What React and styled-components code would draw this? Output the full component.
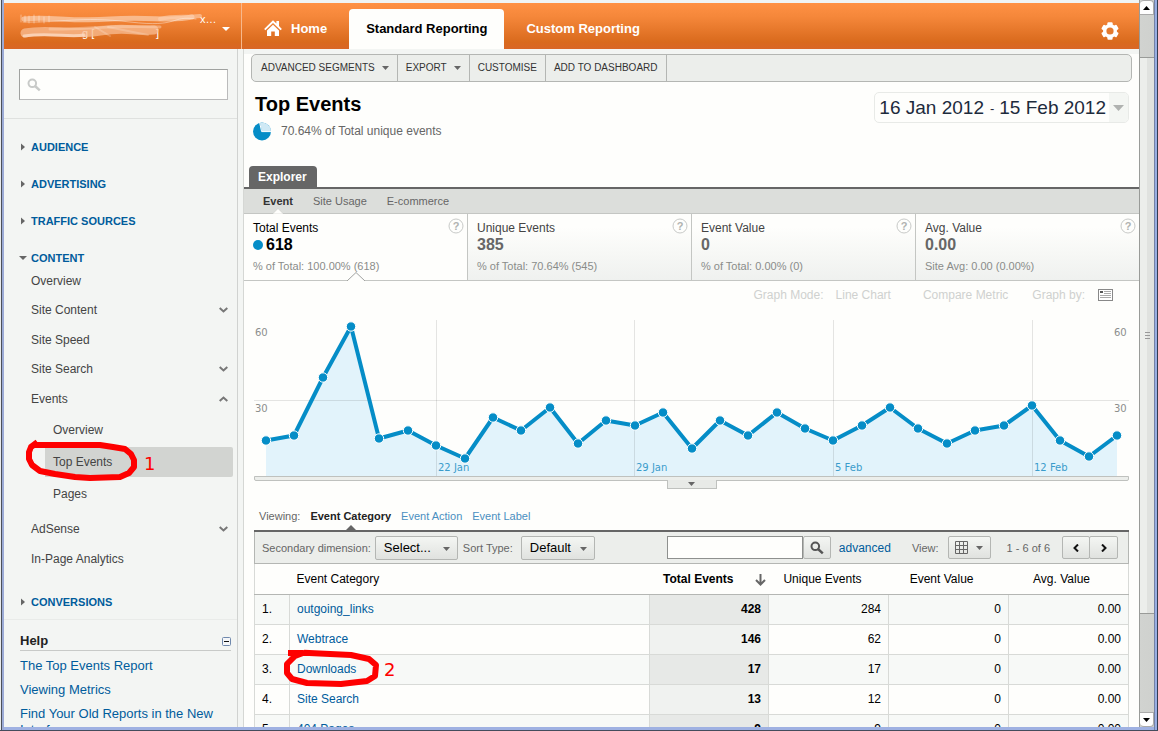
import React from 'react';
import styled, { createGlobalStyle, css } from 'styled-components';

const GlobalStyle = createGlobalStyle`
  * { box-sizing: border-box; }
  html, body { margin: 0; height: 100%; }
  body {
    font-family: "Liberation Sans", Arial, sans-serif;
    font-size: 12px;
    line-height: 16px;
    color: #000;
    background: #fff;
    overflow: hidden;
  }
  #root { height: 100%; }
  button, input, select { font: inherit; color: inherit; margin: 0; padding: 0; }
  ul { list-style: none; margin: 0; padding: 0; }
  a { color: inherit; text-decoration: none; }
  h1, h2, h3 { margin: 0; font: inherit; }
`;

const BLUE = '#058dc7';
const LINK = '#005c9c';
const RED = '#fe0000';

/* ---------- window ---------- */

const Window = styled.div`
  display: flex;
  height: 100vh;
  padding: 0 4px 3px;
  border-bottom: 1px solid #444c5c;
  background: linear-gradient(90deg, #e8ebee 0 1px, #4c5058 1px 2px, #9cabd6 2px 4px, #9fb1e2 4px calc(100% - 4px), #7482a6 calc(100% - 4px) calc(100% - 3px), #98aee2 calc(100% - 3px) calc(100% - 1px), #333c50 calc(100% - 1px));
  overflow: hidden;
`;

const Page = styled.div`
  flex: 1;
  min-width: 0;
  display: flex;
  flex-direction: column;
  background: #fefefc;
`;

const Columns = styled.div`
  flex: 1;
  min-height: 0;
  display: flex;
`;

const ScrollTrack = styled.div`
  width: 15px;
  display: flex;
  flex-direction: column;
  justify-content: space-between;
  border-left: 1px solid #999b98;
  background: linear-gradient(90deg, #d1d3d0, #cfd1ce);
`;

const ScrollButton = styled.button`
  height: 15px;
  display: flex;
  align-items: center;
  justify-content: center;
  border: 1px solid #aaa;
  border-left: 0;
  border-radius: ${(p) => (p.$end ? '0 0 4px 4px' : '4px 4px 0 0')};
  background: #fefefe;
`;

const ScrollThumb = styled.div`
  flex: 557;
  display: flex;
  align-items: center;
  justify-content: center;
  border: solid #999b98;
  border-width: 1px 0;
  background: linear-gradient(90deg, #eceeeb 50%, #e0e2df 50%);
`;

const Trough = styled.div`
  flex: ${(p) => p.$grow};
`;

/* ---------- header ---------- */

const Header = styled.header`
  display: flex;
  height: 49px;
  border-top: 3px solid #f0f4f4;
  background: linear-gradient(#ff9144 0%, #f5873a 30%, #d96a1d 85%, #d96626 100%);
  color: #fff;
`;

const AccountButton = styled.button`
  width: 238px;
  display: flex;
  align-items: center;
  justify-content: space-between;
  padding: 6px 11px 0 16px;
  border: 0;
  border-right: 1px solid #f7b88c;
  background: none;
`;

const HeaderTabs = styled.nav`
  flex: 1;
  display: flex;
  align-items: flex-end;
  font-size: 13px;
  font-weight: bold;
`;

const HeaderTab = styled.a`
  height: 40px;
  display: flex;
  align-items: center;
  gap: 9px;
  padding: 0 ${(p) => p.$pad || 22}px;
  border-radius: 4px 4px 0 0;
  ${(p) => p.$active && css`
    color: #000;
    background: #fefefc;
  `}
`;

const SettingsButton = styled.button`
  width: 58px;
  padding-top: 9px;
  border: 0;
  background: none;
  display: flex;
  align-items: center;
  justify-content: center;
`;

/* ---------- sidebar ---------- */

const Sidebar = styled.aside`
  width: 233px;
  overflow: hidden;
  background: #f3f5f3;
  color: #444;
`;

const Splitter = styled.div`
  width: 7px;
  background: linear-gradient(90deg, #d0d2d0 0 1px, #f3f5f3 1px 6px, #d5d7d4 6px);
`;

const SearchArea = styled.form`
  padding: 20px 9px 18px 15px;
  border-bottom: 1px solid #dfe1df;
`;

const SearchBox = styled.label`
  display: flex;
  align-items: center;
  height: 31px;
  padding-left: 7px;
  gap: 6px;
  border: 1px solid #bbb;
  border-top-color: #a0a2a0;
  border-left-color: #a0a2a0;
  background: #fefefc;
`;

const PlainInput = styled.input`
  flex: 1;
  min-width: 0;
  border: 0;
  outline: 0;
  background: none;
`;

const Sections = styled.nav`
  display: flex;
  flex-direction: column;
  gap: 21px;
  padding: 20px 0 9px 15px;
  border-bottom: 1px solid #e9ebe9;
`;

const SectionTitle = styled.a`
  display: flex;
  align-items: center;
  gap: 4px;
  height: 16px;
  font-size: 11px;
  font-weight: bold;
  color: ${LINK};
`;

const NavItem = styled.a`
  display: flex;
  align-items: center;
  justify-content: space-between;
  height: ${(p) => (p.$group ? 30 : 29)}px;
  padding: 0 9px 0 12px;
`;

const SubList = styled.ul`
  display: flex;
  flex-direction: column;
  gap: 2px;
  padding: 1px 4px 5px 26px;
`;

const SubItem = styled.a`
  position: relative;
  display: flex;
  align-items: center;
  height: 30px;
  padding-left: 8px;
  border-radius: 0 2px 2px 0;
  background: ${(p) => (p.$active ? '#d2d4d1' : 'transparent')};
`;

const Help = styled.section`
  padding: 12px 16px;
  a { display: block; margin-bottom: 8px; color: ${LINK}; font-size: 13px; }
`;

const HelpTitle = styled.div`
  display: flex;
  align-items: center;
  justify-content: space-between;
  height: 19px;
  margin: 0 -10px 7px 0;
  border-bottom: 1px solid #c8cac8;
  font-size: 13px;
  font-weight: bold;
  color: #222;
`;

const IconButton = styled.button`
  display: flex;
  border: 0;
  background: none;
`;

/* ---------- annotations ---------- */

const Ring = styled.svg`
  position: absolute;
  left: ${(p) => p.$left}px;
  top: ${(p) => p.$top}px;
  overflow: visible;
  pointer-events: none;
  z-index: 2;
  path { fill: none; stroke: ${RED}; stroke-width: 6; stroke-linecap: square; stroke-linejoin: round; }
  text { fill: ${RED}; font: 18px "DejaVu Sans", sans-serif; }
`;

/* ---------- report ---------- */

const Main = styled.main`
  flex: 1;
  min-width: 0;
  overflow: hidden;
  border-top: 5px solid #f3f5f3;
`;

const ActionBar = styled.div`
  display: flex;
  height: 28px;
  margin: 0 7px;
  border: 1px solid #b4b6b3;
  border-radius: 5px;
  background: #eceeeb;
`;

const ActionButton = styled.button`
  display: flex;
  align-items: center;
  gap: 7px;
  padding: 0 8px;
  border: 0;
  border-right: 1px solid #b4b6b3;
  background: none;
  font-size: 10px;
  color: #333;
  &:first-child { padding-left: 9px; }
`;

const TitleRow = styled.div`
  display: flex;
  justify-content: space-between;
  align-items: flex-start;
  padding: 10px 10px 0 9px;
`;

const Title = styled.h1`
  padding-left: 2px;
  font-size: 20px;
  line-height: 24px;
  font-weight: bold;
`;

const Coverage = styled.p`
  display: flex;
  align-items: center;
  gap: 9px;
  height: 20px;
  margin: 5px 0 0;
  color: #666;
`;

const DateButton = styled.button`
  display: flex;
  align-items: center;
  height: 31px;
  padding: 0 0 0 4px;
  border: 1px solid #e8eae7;
  border-radius: 5px;
  background: #fefefc;
  font-size: 19px;
  color: #1d2b3c;
  overflow: hidden;
  small { font-size: 13px; padding: 3px 5px 0 6px; }
`;

const DateArrow = styled.span`
  display: flex;
  align-items: center;
  justify-content: center;
  align-self: stretch;
  width: 19px;
  margin-left: 3px;
  background: #f4f6f3;
`;

const TabStrip = styled.div`
  display: flex;
  margin-top: 25px;
  padding-left: 5px;
  border-bottom: 2px solid #666;
`;

const ExplorerTab = styled.button`
  height: 21px;
  padding: 0 10px 0 9px;
  border: 0;
  border-radius: 4px 4px 0 0;
  background: #666;
  color: #fff;
  font-weight: bold;
  font-size: 12px;
`;

const GroupNav = styled.nav`
  display: flex;
  align-items: center;
  gap: 20px;
  height: 25px;
  padding-left: 19px;
  border-bottom: 1px solid #c4c6c3;
  background: #dcdedb;
  font-size: 11px;
  color: #666;
`;

const GroupLink = styled.a`
  position: relative;
  ${(p) => p.$active && css`
    color: #333;
    font-weight: bold;
  `}
`;

const Notch = styled.svg`
  position: absolute;
  left: 50%;
  bottom: ${(p) => p.$bottom}px;
  transform: translateX(-50%);
  display: block;
`;

const Cards = styled.div`
  display: flex;
  border-bottom: 1px solid #c4c6c3;
`;

const Card = styled.button`
  position: relative;
  flex: 1;
  display: flex;
  flex-direction: column;
  height: 66px;
  padding: 6px 9px 0;
  border: 0;
  text-align: left;
  color: #444;
  background: linear-gradient(#fefefc 20%, #eff1ef);
  &:not(:last-child) { border-right: 1px solid #c4c6c3; }
  ${(p) => p.$active && css`
    color: #000;
    background: #fefefc;
  `}
`;

const CardValue = styled.strong`
  display: flex;
  align-items: center;
  gap: 3px;
  height: 18px;
  font-size: 16px;
  color: ${(p) => (p.$active ? '#000' : '#666')};
`;

const CardNote = styled.span`
  display: block;
  margin-top: 5px;
  font-size: 11px;
  line-height: 14px;
  color: #8a8c8a;
`;

const HelpMark = styled.svg`
  position: absolute;
  top: 4px;
  right: 3px;
  circle { fill: #fefefc; stroke: #c8cac8; }
  text { font: bold 11px "Liberation Sans", sans-serif; fill: #b0b2b0; text-anchor: middle; }
`;

const GraphOptions = styled.div`
  display: flex;
  justify-content: flex-end;
  align-items: center;
  height: 28px;
  padding-right: 26px;
  color: #cfd1cf;
  span + span { margin-left: 12px; }
  span:nth-child(3) { margin-left: 32px; }
  span:nth-child(4) { margin-left: 24px; }
  svg { margin-left: 13px; }
`;

const ChartBox = styled.section`
  margin: 11px 10px 0;
  svg { display: block; width: 100%; height: auto; }
  text { font: 10px "DejaVu Sans", sans-serif; fill: #8c8e8c; }
  text.date { fill: #3a9ccb; }
`;

const ChartBar = styled.div`
  height: 5px;
  margin: 0 10px;
  border: 1px solid #bfc1be;
  border-radius: 0 0 2px 2px;
  background: #eceeeb;
`;

const ChartHandle = styled.button`
  display: flex;
  align-items: center;
  justify-content: center;
  width: 50px;
  height: 9px;
  margin: -1px auto 0;
  border: 1px solid #bfc1be;
  border-top: 0;
  background: #e8eae7;
`;

const Viewing = styled.nav`
  display: flex;
  align-items: center;
  gap: 10px;
  height: 41px;
  padding: 13px 0 0 15px;
  font-size: 11px;
  color: #666;
  a { color: #4a8fc0; }
`;

const CurrentDimension = styled.strong`
  position: relative;
  color: #222;
`;

const DataPanel = styled.section`
  margin: 0 10px;
  border-top: 2px solid #666;
`;

const DataToolbar = styled.div`
  display: flex;
  align-items: center;
  height: 32px;
  padding: 0 10px 0 7px;
  border: 1px solid #b4b6b3;
  border-top: 0;
  background: #eceeeb;
  font-size: 11px;
  color: #666;
`;

const Field = styled.label`
  display: flex;
  align-items: center;
  gap: ${(p) => p.$gap || 4}px;
  margin-right: ${(p) => p.$after || 5}px;
`;

const SelectWrap = styled.span`
  position: relative;
  display: flex;
  align-items: center;
  svg { position: absolute; right: 8px; top: 11px; pointer-events: none; }
`;

const buttonFace = css`
  border: 1px solid #b4b6b3;
  border-radius: 2px;
  background: linear-gradient(#f4f6f3, #e0e2df);
`;

const Select = styled.select`
  appearance: none;
  width: ${(p) => p.$width}px;
  height: 24px;
  padding-left: 8px;
  font-size: 13px;
  color: #000;
  ${buttonFace}
`;

const TableSearch = styled.form`
  display: flex;
  margin-left: auto;
  height: 23px;
`;

const TableInput = styled.input`
  width: 136px;
  border: 1px solid #8e908e;
  background: #fefefc;
`;

const ToolButton = styled.button`
  display: flex;
  align-items: center;
  justify-content: center;
  gap: 8px;
  width: ${(p) => p.$width}px;
  height: 23px;
  ${buttonFace}
`;

const Advanced = styled.a`
  margin: 0 21px 0 8px;
  font-size: 12px;
  color: ${LINK};
`;

const Pager = styled.div`
  display: flex;
  margin-left: 12px;
  button + button { margin-left: -1px; }
`;

const Table = styled.table`
  width: 100%;
  table-layout: fixed;
  border-collapse: collapse;
  border-left: 1px solid #d8dad7;
  border-right: 1px solid #d8dad7;
`;

const HeadCell = styled.th`
  height: 30px;
  padding: 0 ${(p) => p.$pad || 0}px 0 7px;
  border-bottom: 1px solid #b4b6b3;
  text-align: ${(p) => (p.$num ? 'right' : 'left')};
  font-weight: ${(p) => (p.$sorted ? 'bold' : 'normal')};
  svg { vertical-align: middle; margin-left: 21px; }
`;

const Row = styled.tr`
  height: 30px;
  background: ${(p) => (p.$odd ? '#f7f9f7' : '#fefefc')};
`;

const Cell = styled.td`
  position: relative;
  padding: 0 7px;
  border: 1px solid #d8dad7;
  border-top: 0;
  text-align: ${(p) => (p.$num ? 'right' : 'left')};
  ${(p) => p.$sorted && css`
    font-weight: bold;
    background: ${p.$odd ? '#e7e9e7' : '#f0f2f0'};
  `}
  a { color: ${LINK}; }
`;

/* ---------- drawings ---------- */

const Down = ({ color = '#666', w = 7, h = 4 }) => (
  <svg width={w} height={h} viewBox={`0 0 ${w} ${h}`} aria-hidden="true">
    <path d={`M0 0H${w}L${w / 2} ${h}Z`} fill={color} />
  </svg>
);

const RightMark = () => (
  <svg width="8" height="8" viewBox="0 0 8 8" aria-hidden="true">
    <path d="M2 0.5L6 4L2 7.5Z" fill="#666" />
  </svg>
);

const Chevron = ({ up }) => (
  <svg width="9" height="6" viewBox="0 0 9 6" aria-hidden="true">
    <path d={up ? 'M0.7 5L4.5 1.5L8.3 5' : 'M0.7 1L4.5 4.5L8.3 1'} fill="none" stroke="#777" strokeWidth="2" />
  </svg>
);

const Magnifier = ({ color, size = 14 }) => (
  <svg width={size} height={size} viewBox="0 0 14 14" aria-hidden="true">
    <circle cx="5.3" cy="5.3" r="3.8" fill="none" stroke={color} strokeWidth="2" />
    <path d="M8 8L12.8 12.4" stroke={color} strokeWidth="2.4" />
  </svg>
);

const PageArrow = ({ back }) => (
  <svg width="6" height="8" viewBox="0 0 6 8" aria-hidden="true">
    <path d={back ? 'M5 0.5L1.5 4L5 7.5' : 'M1 0.5L4.5 4L1 7.5'} fill="none" stroke="#111" strokeWidth="2" />
  </svg>
);

const HomeIcon = () => (
  <svg width="18" height="19" viewBox="0 0 18 19" aria-hidden="true">
    <path d="M9 0.3L12.4 3.5V1H15V6L17.9 8.9L16.6 10.3L9 3L1.4 10.3L0.1 8.9Z" fill="#fff" />
    <path d="M9 4.8L15 10.6V16H10.8V11.4H7.2V16H3V10.6Z" fill="#fff" />
  </svg>
);

const Gear = () => (
  <svg width="18" height="18" viewBox="0 0 18 18" aria-hidden="true">
    <g fill="#fff">
      <circle cx="9" cy="9" r="7" />
      {[0, 60, 120].map((a) => (
        <rect key={a} x="6.4" y="0.3" width="5.2" height="17.4" rx="1" transform={`rotate(${a} 9 9)`} />
      ))}
    </g>
    <circle cx="9" cy="9" r="3.6" fill="#e47a2f" />
  </svg>
);

const Pie = () => (
  <svg width="19" height="19" viewBox="0 0 19 19" aria-hidden="true">
    <circle cx="9" cy="9.5" r="9" fill={BLUE} />
    <path d="M9 9.5L7 0.7A9 9 0 0 1 18 9.5Z" fill="#cfe9f5" />
    <path d="M6.5 0L8.6 9.6H19" fill="none" stroke="#fff" strokeWidth="1" />
  </svg>
);

const AccountName = () => (
  <svg width="198" height="38" viewBox="0 0 198 38" fontSize="11" aria-hidden="true">
    <g fill="#fff">
      <text x="180" y="13">x…</text>
      <text x="62" y="27">g [</text>
      <text x="136" y="27">]</text>
    </g>
    <g fill="none" stroke="#fff" strokeLinecap="round">
      <path d="M4 9C30 6 50 12 90 9S150 12 172 7" stroke="#fbd0b0" strokeWidth="5" opacity="0.7" />
      <path d="M140 9C155 5 165 8 180 6" stroke="#fbd0b0" strokeWidth="4" opacity="0.6" />
      <path d="M3 12C40 13 60 6 110 12S150 5 176 9" strokeWidth="1" opacity="0.4" />
      <path d="M1 5V12M5 6V12M9 6V13M14 5V13M19 6V12M24 7V13M29 6V12" strokeWidth="1" opacity="0.4" />
      <path d="M5 23C30 18 50 26 80 21S110 22 134 20" stroke="#f8bd94" strokeWidth="9" opacity="0.75" />
      <path d="M4 26C30 22 50 28 64 25" stroke="#fde0cc" strokeWidth="3" opacity="0.7" />
      <path d="M30 19C60 20 90 15 140 17" stroke="#fbd0b0" strokeWidth="3" opacity="0.5" />
      <path d="M75 17L90 26M88 17L128 25" strokeWidth="2" opacity="0.2" />
    </g>
  </svg>
);

const Question = () => (
  <HelpMark width="16" height="16" viewBox="0 0 16 16" aria-hidden="true">
    <circle cx="8" cy="8" r="7" />
    <text x="8" y="12">?</text>
  </HelpMark>
);

const heights = [440, 435, 377, 326, 438, 430, 445, 458, 417, 430, 407, 443, 420, 425, 412, 448, 420, 435, 412, 428, 440, 425, 407, 428, 443, 430, 425, 405, 440, 456, 435];
const points = heights.map((h, i) => [12 + Math.round((i * 851) / 30), h - 319.5]);
const line = points.map((p) => p.join(',')).join(' ');

const Chart = () => (
  <svg viewBox="0 0 875 156" role="img" aria-label="Total events per day">
    <polygon points={`12,156 ${line} 863,156`} fill="#e2f3fb" />
    <g stroke="#000" strokeOpacity="0.1">
      {[182.5, 380.5, 579.5, 778.5].map((x) => (
        <line key={x} x1={x} x2={x} y1="0" y2="156" />
      ))}
      <line x1="0" x2="875" y1="80.5" y2="80.5" />
    </g>
    <polyline points={line} fill="none" stroke={BLUE} strokeWidth="4" strokeLinejoin="round" />
    {points.map(([x, y]) => (
      <circle key={x} cx={x} cy={y} r="4.7" fill={BLUE} stroke="#fff" strokeWidth="1" />
    ))}
    <text x="1" y="16">60</text>
    <text x="1" y="92">30</text>
    <text x="860" y="16">60</text>
    <text x="860" y="92">30</text>
    <text className="date" x="184" y="151">22 Jan</text>
    <text className="date" x="382" y="151">29 Jan</text>
    <text className="date" x="581" y="151">5 Feb</text>
    <text className="date" x="780" y="151">12 Feb</text>
  </svg>
);

/* ---------- data ---------- */

const metrics = [
  { name: 'Total Events', value: '618', note: '% of Total: 100.00% (618)', active: true },
  { name: 'Unique Events', value: '385', note: '% of Total: 70.64% (545)' },
  { name: 'Event Value', value: '0', note: '% of Total: 0.00% (0)' },
  { name: 'Avg. Value', value: '0.00', note: 'Site Avg: 0.00 (0.00%)' },
];

const rows = [
  ['outgoing_links', 428, 284],
  ['Webtrace', 146, 62],
  ['Downloads', 17, 17],
  ['Site Search', 13, 12],
  ['404 Pages', 9, 9],
];

const Section = ({ children, open }) => (
  <SectionTitle href="#">
    {open ? <Down w={8} h={4} /> : <RightMark />}
    {children}
  </SectionTitle>
);

const Item = ({ children, open }) => (
  <NavItem href="#" $group={open !== undefined}>
    {children}
    {open !== undefined && <Chevron up={open} />}
  </NavItem>
);

export default function App() {
  return (
    <Window>
      <GlobalStyle />
      <Page>
        <Header>
          <AccountButton aria-label="Account">
            <AccountName />
            <Down color="#fff" w={8} h={4} />
          </AccountButton>
          <HeaderTabs>
            <HeaderTab href="#"><HomeIcon />Home</HeaderTab>
            <HeaderTab href="#" $active $pad={17}>Standard Reporting</HeaderTab>
            <HeaderTab href="#">Custom Reporting</HeaderTab>
          </HeaderTabs>
          <SettingsButton aria-label="Settings"><Gear /></SettingsButton>
        </Header>
        <Columns>
          <Sidebar>
            <SearchArea>
              <SearchBox>
                <Magnifier color="#c8cac8" />
                <PlainInput type="text" aria-label="Find a report" />
              </SearchBox>
            </SearchArea>
            <Sections>
              <Section>AUDIENCE</Section>
              <Section>ADVERTISING</Section>
              <Section>TRAFFIC SOURCES</Section>
              <div>
                <Section open>CONTENT</Section>
                <Item>Overview</Item>
                <Item open={false}>Site Content</Item>
                <Item>Site Speed</Item>
                <Item open={false}>Site Search</Item>
                <Item open>Events</Item>
                <SubList>
                  <li><SubItem href="#">Overview</SubItem></li>
                  <li>
                    <SubItem href="#" $active>
                      Top Events
                      <Ring $left={-20} $top={-6} width="112" height="40" viewBox="0 0 112 40">
                        <path d="M10 3L6 6L4 11L4 18L7 24L15 30L30 33L50 36L65 37L95 36L104 32L109 26L109 19L106 13L100 8L88 6L75 4H11" />
                        <text x="119" y="29">1</text>
                      </Ring>
                    </SubItem>
                  </li>
                  <li><SubItem href="#">Pages</SubItem></li>
                </SubList>
                <Item open={false}>AdSense</Item>
                <Item>In-Page Analytics</Item>
              </div>
              <Section>CONVERSIONS</Section>
            </Sections>
            <Help>
              <HelpTitle>
                Help
                <IconButton aria-label="Collapse help">
                  <svg width="9" height="9" viewBox="0 0 9 9">
                    <rect x="0.5" y="0.5" width="8" height="8" rx="1" fill="#f4f6f8" stroke="#7089ad" />
                    <path d="M2 4.5H7" stroke="#111" />
                  </svg>
                </IconButton>
              </HelpTitle>
              <a href="#">The Top Events Report</a>
              <a href="#">Viewing Metrics</a>
              <a href="#">Find Your Old Reports in the New Interface</a>
            </Help>
          </Sidebar>
          <Splitter />
          <Main>
            <ActionBar>
              <ActionButton>ADVANCED SEGMENTS <Down /></ActionButton>
              <ActionButton>EXPORT <Down /></ActionButton>
              <ActionButton>CUSTOMISE</ActionButton>
              <ActionButton>ADD TO DASHBOARD</ActionButton>
            </ActionBar>
            <TitleRow>
              <div>
                <Title>Top Events</Title>
                <Coverage><Pie />70.64% of Total unique events</Coverage>
              </div>
              <DateButton>
                16 Jan 2012<small>-</small>15 Feb 2012
                <DateArrow><Down color="#b0b2b0" w={11} h={6} /></DateArrow>
              </DateButton>
            </TitleRow>
            <TabStrip><ExplorerTab>Explorer</ExplorerTab></TabStrip>
            <GroupNav>
              <GroupLink href="#" $active>
                Event
                <Notch $bottom={-5} width="10" height="6" viewBox="0 0 10 6">
                  <path d="M0 5.5L5 0.5L10 5.5V6H0Z" fill="#fefefc" stroke="#c4c6c3" strokeWidth="0.5" />
                </Notch>
              </GroupLink>
              <GroupLink href="#">Site Usage</GroupLink>
              <GroupLink href="#">E-commerce</GroupLink>
            </GroupNav>
            <Cards>
              {metrics.map((m) => (
                <Card key={m.name} $active={m.active}>
                  {m.name}
                  <CardValue $active={m.active}>
                    {m.active && (
                      <svg width="10" height="10" viewBox="0 0 10 10"><circle cx="5" cy="5" r="5" fill={BLUE} /></svg>
                    )}
                    {m.value}
                  </CardValue>
                  <CardNote>{m.note}</CardNote>
                  <Question />
                  {m.active && (
                    <Notch $bottom={-1} width="18" height="9" viewBox="0 0 18 9">
                      <path d="M0 9L9 0.5L18 9" fill="#fefefc" stroke="#a0a2a0" />
                    </Notch>
                  )}
                </Card>
              ))}
            </Cards>
            <GraphOptions>
              <span>Graph Mode:</span>
              <span>Line Chart</span>
              <span>Compare Metric</span>
              <span>Graph by:</span>
              <svg width="15" height="12" viewBox="0 0 15 12" aria-hidden="true">
                <rect x="0.5" y="0.5" width="14" height="11" fill="#fff" stroke="#888" />
                <path d="M2 3H5" stroke="#555" strokeWidth="2" />
                <path d="M6 2.5H13M6 4.5H13M2 6.5H13M2 8.5H13" stroke="#aaa" />
              </svg>
            </GraphOptions>
            <ChartBox><Chart /></ChartBox>
            <ChartBar />
            <ChartHandle aria-label="Annotations"><Down /></ChartHandle>
            <Viewing>
              Viewing:
              <CurrentDimension>
                Event Category
                <Notch $bottom={-7} width="12" height="6" viewBox="0 0 12 6">
                  <path d="M0 6L6 0L12 6Z" fill="#666" />
                </Notch>
              </CurrentDimension>
              <a href="#">Event Action</a>
              <a href="#">Event Label</a>
            </Viewing>
            <DataPanel>
              <DataToolbar>
                <Field>
                  Secondary dimension:
                  <SelectWrap>
                    <Select $width={83}><option>Select...</option></Select>
                    <Down />
                  </SelectWrap>
                </Field>
                <Field $gap={8}>
                  Sort Type:
                  <SelectWrap>
                    <Select $width={74}><option>Default</option></Select>
                    <Down />
                  </SelectWrap>
                </Field>
                <TableSearch>
                  <TableInput type="text" aria-label="Search table" />
                  <ToolButton $width={28} aria-label="Search"><Magnifier color="#555" /></ToolButton>
                </TableSearch>
                <Advanced href="#">advanced</Advanced>
                <Field $gap={9} $after={16}>
                  View:
                  <ToolButton $width={43}>
                    <svg width="13" height="13" viewBox="0 0 13 13" aria-hidden="true">
                      <path d="M0.5 0.5H12.5V12.5H0.5ZM0.5 4.5H12.5M0.5 8.5H12.5M4.5 0.5V12.5M8.5 0.5V12.5" fill="none" stroke="#666" />
                    </svg>
                    <Down />
                  </ToolButton>
                </Field>
                <span>1 - 6 of 6</span>
                <Pager>
                  <ToolButton $width={28} aria-label="Previous"><PageArrow back /></ToolButton>
                  <ToolButton $width={29} aria-label="Next"><PageArrow /></ToolButton>
                </Pager>
              </DataToolbar>
              <Table>
                <colgroup>
                  <col width="35" />
                  <col />
                  <col width="119" />
                  <col width="120" />
                  <col width="120" />
                  <col width="120" />
                </colgroup>
                <thead>
                  <tr>
                    <HeadCell />
                    <HeadCell scope="col">Event Category</HeadCell>
                    <HeadCell scope="col" $num $sorted $pad={3}>
                      Total Events
                      <svg width="11" height="12" viewBox="0 0 11 12" aria-hidden="true">
                        <path d="M5.5 0V10M1 6L5.5 10.5L10 6" fill="none" stroke="#666" strokeWidth="2" />
                      </svg>
                    </HeadCell>
                    <HeadCell scope="col" $num $pad={27}>Unique Events</HeadCell>
                    <HeadCell scope="col" $num $pad={35}>Event Value</HeadCell>
                    <HeadCell scope="col" $num $pad={38}>Avg. Value</HeadCell>
                  </tr>
                </thead>
                <tbody>
                  {rows.map(([name, total, unique], i) => (
                    <Row key={name} $odd={i % 2 === 0}>
                      <Cell>{i + 1}.</Cell>
                      <Cell>
                        <a href="#">{name}</a>
                        {name === 'Downloads' && (
                          <Ring $left={-7} $top={-4} width="96" height="36" viewBox="0 0 96 36">
                            <path d="M8 2H20L12 5L4 13V22L9 28L24 32L58 33L84 30L92 25L93 14L86 8L68 4L24 2" />
                            <text x="101" y="25">2</text>
                          </Ring>
                        )}
                      </Cell>
                      <Cell $num $sorted $odd={i % 2 === 0}>{total}</Cell>
                      <Cell $num>{unique}</Cell>
                      <Cell $num>0</Cell>
                      <Cell $num>0.00</Cell>
                    </Row>
                  ))}
                </tbody>
              </Table>
            </DataPanel>
          </Main>
        </Columns>
      </Page>
      <ScrollTrack>
        <ScrollButton aria-label="Scroll up">
          <svg width="7" height="4" viewBox="0 0 7 4"><path d="M0 4L3.5 0L7 4Z" /></svg>
        </ScrollButton>
        <Trough $grow={42} />
        <ScrollThumb>
          <svg width="5" height="7" viewBox="0 0 5 7"><path d="M0 0.5H5M0 3.5H5M0 6.5H5" stroke="#999" /></svg>
        </ScrollThumb>
        <Trough $grow={98} />
        <ScrollButton $end aria-label="Scroll down"><Down color="#000" /></ScrollButton>
      </ScrollTrack>
    </Window>
  );
}
